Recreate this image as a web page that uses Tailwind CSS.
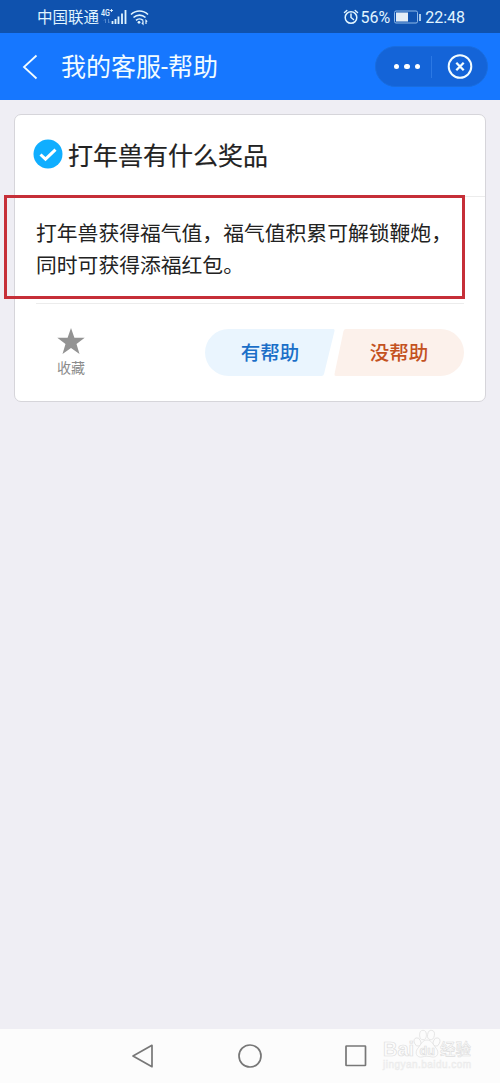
<!DOCTYPE html>
<html lang="zh-CN">
<head>
  <meta charset="UTF-8" />
  <meta name="viewport" content="width=device-width, initial-scale=1" />
  <title>我的客服-帮助</title>
  <script src="https://cdn.jsdelivr.net/npm/@tailwindcss/browser@4"></script>
</head>
<body class="flex h-screen flex-col overflow-hidden bg-[#efeef4] font-['Roboto','Noto_Sans_CJK_SC',sans-serif]">

  <!-- Status bar -->
  <div class="flex h-[33px] shrink-0 items-center justify-between bg-[#0f52ae] pr-[35px] pl-[37px] text-[#e0f4ff]">
    <div class="flex items-center">
      <span class="pt-0.5 text-[15.5px] leading-5">中国联通</span>
      <svg class="ml-px h-5 w-[50px]" width="50" height="20" viewBox="0 0 50 20" fill="none">
        <text x="1" y="8.5" font-family="Roboto" font-size="9" font-weight="500" fill="currentColor" textLength="9" lengthAdjust="spacingAndGlyphs">4G</text>
        <path d="M11.500 2v3M10 3.500h3" stroke="currentColor" stroke-width="0.900" />
        <path d="M5.500 12v4M4 13.500l1.500-1.500M8.500 12v4l1.500-1.500" stroke="#5288cf" stroke-width="1" />
        <path d="M12.500 14v3M15.500 12v5M18.500 9.500v7.500M22 6.500v10.500M25.500 3v14" stroke="currentColor" stroke-width="1.800" />
        <path d="M31 7.500c5-4.700 12-4.700 17 0M33.500 10.500c3.500-3.200 8.500-3.200 12 0M36 13.300c2-1.800 5-1.800 7 0" stroke="currentColor" stroke-width="1.600" />
        <circle cx="39" cy="15.300" r="1.400" fill="currentColor" />
        <path d="M43 13.500v3.500l-1.200-1.200M46 17v-3.500l1.200 1.200" stroke="currentColor" stroke-width="1.200" />
      </svg>
    </div>
    <div class="flex items-center">
      <svg class="h-4 w-4" viewBox="0 0 16 16" fill="none" stroke="currentColor" stroke-width="1.500" stroke-linecap="round">
        <circle cx="8" cy="8.500" r="5.800" />
        <path d="M8 5v3.500l2.500 2M1.500 3.500l2.300-2M14.500 3.500l-2.300-2" />
      </svg>
      <span class="ml-px pt-0.5 text-base leading-5">56%</span>
      <svg class="ml-1 h-3.5 w-[27px]" viewBox="0 0 27 14" width="27" height="14" fill="none">
        <rect x="0.500" y="1" width="23" height="12" rx="1.500" stroke="#8fb9e8" />
        <rect x="2" y="2.500" width="12" height="9" fill="#e3edf6" />
        <path d="M26 4v7" stroke="currentColor" stroke-width="1.500" />
      </svg>
      <span class="ml-1 pt-0.5 text-base leading-5">22:48</span>
    </div>
  </div>

  <!-- Title bar -->
  <header class="flex h-[67px] shrink-0 items-center bg-[#1677ff] pr-3 pl-[22px] text-[#f2fcff]">
    <svg class="h-[26px] w-4" viewBox="0 0 16 26" fill="none" stroke="currentColor" stroke-width="1.800">
      <path d="M14.500 1.500L2 13l12.500 11.500" />
    </svg>
    <h1 class="ml-[23px] pt-0.5 text-[25px] leading-8">我的客服-帮助</h1>
    <div class="ml-auto flex h-[41px] w-[113px] items-center rounded-full border border-[#196ddf] bg-[#1464d8]">
      <div class="flex w-[55px] items-center justify-end gap-[5px] pr-[11px]">
        <i class="size-[5.500px] rounded-full bg-white"></i>
        <i class="size-[5.500px] rounded-full bg-white"></i>
        <i class="size-[5.500px] rounded-full bg-white"></i>
      </div>
      <div class="h-[22px] w-px bg-[#2b78e4]"></div>
      <svg class="ml-[15px] size-[26px]" viewBox="0 0 26 26" fill="none" stroke="currentColor">
        <circle cx="13" cy="12.500" r="11.300" stroke-width="2" />
        <path d="M9.300 8.800l7.400 7.400M16.700 8.800l-7.400 7.400" stroke-width="2.300" />
      </svg>
    </div>
  </header>

  <main class="flex-1 pt-3.5 pr-3.5 pl-3.5">
    <section class="relative h-[288px] rounded-[7px] border border-[#d6d5da] bg-white">
      <div class="flex h-[82px] items-center border-b border-[#ececec] pl-[18px]">
        <svg class="-mt-1 size-[30px]" viewBox="0 0 30 30" fill="none">
          <circle cx="15" cy="15" r="14.500" fill="#10aeff" />
          <path d="M7.500 15.500l5 4.700 10-9.500" stroke="#fff" stroke-width="3" />
        </svg>
        <h2 class="ml-[5px] pt-0.5 text-[25px] leading-8 text-[#222] [-webkit-text-stroke:0.2px_#222]">打年兽有什么奖品</h2>
      </div>

      <p class="mx-[21px] h-[107px] border-b border-[#ececec] pt-[21px] text-[20.800px] leading-8 whitespace-nowrap text-[#222]">打年兽获得福气值，福气值积累可解锁鞭炮，<br />同时可获得添福红包。</p>

      <div class="flex pt-[25px] pr-[21px] pl-[41px]">
        <div class="flex w-[30px] flex-col items-center">
          <svg class="-mt-px h-[27px] w-[28px]" viewBox="0 0 28 27" fill="#939393">
            <path d="M14 0l3.400 9.700h10.300l-8.200 6.200 3 10L14 20l-8.500 5.900 3-10L.3 9.700h10.300z" />
          </svg>
          <span class="mt-[3px] text-[14px] leading-5 whitespace-nowrap text-[#8c8c8c]">收藏</span>
        </div>
        <div class="ml-auto flex text-[19.500px] font-medium">
          <button class="grid h-[47px] w-[130px] place-items-center">
            <svg class="col-start-1 row-start-1" width="130" height="47" viewBox="0 0 130 47">
              <path d="M23.500 0H128q2 0 1.500 2L119 45q-.5 2-2.500 2h-93a23.500 23.500 0 0 1 0-47z" fill="#eaf5fe" />
            </svg>
            <span class="col-start-1 row-start-1 pt-[3px] text-[#1b6fc8]">有帮助</span>
          </button>
          <button class="-ml-px grid h-[47px] w-[130px] place-items-center">
            <svg class="col-start-1 row-start-1" width="130" height="47" viewBox="0 0 130 47">
              <path d="M12 0h94.500a23.500 23.500 0 0 1 0 47H2Q0 47 .5 45L9.500 2q.5-2 2.500-2z" fill="#fcf1eb" />
            </svg>
            <span class="col-start-1 row-start-1 pt-[3px] text-[#c4521f]">没帮助</span>
          </button>
        </div>
      </div>

      <!-- Highlight frame around the answer -->
      <div class="absolute top-[80px] -left-[11px] h-[104px] w-[461px] border-3 border-[#c62f38]"></div>
    </section>
  </main>

  <!-- System navigation -->
  <nav class="relative flex h-[54px] shrink-0 items-center bg-[#fcfcfc] pl-[131px] text-[#777]">
    <svg width="236" height="26" viewBox="0 0 236 26" fill="none" stroke="currentColor" stroke-width="1.700" stroke-linejoin="round">
      <path d="M21 2.300v21.400L2 13z" />
      <circle cx="119" cy="13" r="11" />
      <rect x="215" y="3" width="19.500" height="19.500" rx="0.500" />
    </svg>
    <!-- Watermark -->
    <svg class="absolute top-0 left-[380px]" width="95" height="46" viewBox="0 0 95 46" fill="#fcfcfc" stroke="#dedede" stroke-width="0.700">
      <text x="3" y="27" font-family="Liberation Sans" font-weight="700" font-size="20" textLength="31" lengthAdjust="spacingAndGlyphs">Bai</text>
      <ellipse cx="37.500" cy="13" rx="3.200" ry="4.300" transform="rotate(-20 37.500 13)" />
      <ellipse cx="43" cy="6" rx="3.400" ry="4.700" />
      <ellipse cx="51" cy="6" rx="3.400" ry="4.700" transform="rotate(10 51 6)" />
      <ellipse cx="56.500" cy="13" rx="3.200" ry="4.300" transform="rotate(20 56.500 13)" />
      <path d="M47 11c5 0 6 5 9 8 4 5 1 10-4 9-4-1-7-1-10 0-5 1-8-4-4-9 3-3 4-8 9-8z" />
      <text x="39.500" y="25.500" font-family="Liberation Sans" font-weight="700" font-size="12.500">du</text>
      <text x="60" y="26" font-family="Noto Sans CJK SC" font-weight="500" font-size="15.500" stroke-width="0.600" textLength="31">经验</text>
      <text x="3" y="39" font-family="Liberation Sans" font-size="10" fill="#f6f6f6" stroke="#ebebeb" stroke-width="0.500" textLength="88">jingyan.baidu.com</text>
    </svg>
  </nav>

</body>
</html>
